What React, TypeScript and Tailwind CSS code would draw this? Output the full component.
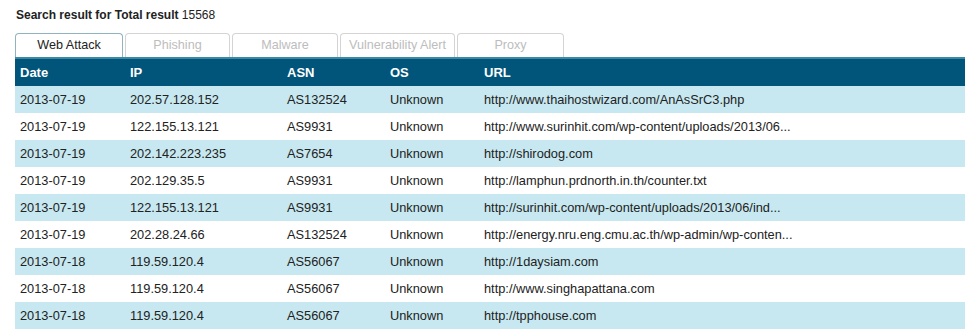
const rows = [
  { date: '2013-07-19', ip: '202.57.128.152', asn: 'AS132524', os: 'Unknown', url: 'http://www.thaihostwizard.com/AnAsSrC3.php' },
  { date: '2013-07-19', ip: '122.155.13.121', asn: 'AS9931', os: 'Unknown', url: 'http://www.surinhit.com/wp-content/uploads/2013/06...' },
  { date: '2013-07-19', ip: '202.142.223.235', asn: 'AS7654', os: 'Unknown', url: 'http://shirodog.com' },
  { date: '2013-07-19', ip: '202.129.35.5', asn: 'AS9931', os: 'Unknown', url: 'http://lamphun.prdnorth.in.th/counter.txt' },
  { date: '2013-07-19', ip: '122.155.13.121', asn: 'AS9931', os: 'Unknown', url: 'http://surinhit.com/wp-content/uploads/2013/06/ind...' },
  { date: '2013-07-19', ip: '202.28.24.66', asn: 'AS132524', os: 'Unknown', url: 'http://energy.nru.eng.cmu.ac.th/wp-admin/wp-conten...' },
  { date: '2013-07-18', ip: '119.59.120.4', asn: 'AS56067', os: 'Unknown', url: 'http://1daysiam.com' },
  { date: '2013-07-18', ip: '119.59.120.4', asn: 'AS56067', os: 'Unknown', url: 'http://www.singhapattana.com' },
  { date: '2013-07-18', ip: '119.59.120.4', asn: 'AS56067', os: 'Unknown', url: 'http://tpphouse.com' },
];

const tabs = [
  { label: 'Web Attack', w: 'w-[108px]' },
  { label: 'Phishing', w: 'w-[105px]' },
  { label: 'Malware', w: 'w-[106px]' },
  { label: 'Vulnerability Alert', w: 'w-[115px]' },
  { label: 'Proxy', w: 'w-[107px]' },
];

export default function App() {
  return (
    <div className="w-[967px] h-[336px] bg-white text-[12px] text-[#333] font-['Liberation_Sans',Arial,sans-serif]">
      <div className="pl-[16px] pt-[6px] h-[33px] text-[12px] text-[#222]">
        <span className="font-bold">Search result for Total result</span> 15568
      </div>

      <div className="flex gap-[2px] pl-[15px] h-[24px] items-end">
        {tabs.map((t, i) => (
          <div
            key={t.label}
            className={`${t.w} h-[24px] flex items-center justify-center rounded-t-[4px] border border-b-0 text-[12.6px] ${
              i === 0 ? 'border-[#8fb3bf] text-[#222] bg-white' : 'border-[#d4d4d4] text-[#bdbdbd] bg-white'
            }`}
          >
            {t.label}
          </div>
        ))}
      </div>

      <div className="ml-[15px] w-[950px]">
        <div className="flex h-[29px] items-center bg-[#01557a] border-t-2 border-[#3a8aa3] text-white font-bold text-[13px]">
          <div className="w-[115px] pl-[5px]">Date</div>
          <div className="w-[157px]">IP</div>
          <div className="w-[103px]">ASN</div>
          <div className="w-[94px]">OS</div>
          <div className="flex-1">URL</div>
        </div>
        {rows.map((r, i) => (
          <div
            key={i}
            className={`flex h-[27px] items-center text-[12.8px] text-[#222] ${i % 2 === 0 ? 'bg-[#c7e8f0]' : 'bg-white'}`}
          >
            <div className="w-[115px] pl-[5px]">{r.date}</div>
            <div className="w-[157px]">{r.ip}</div>
            <div className="w-[103px]">{r.asn}</div>
            <div className="w-[94px]">{r.os}</div>
            <div className="flex-1">{r.url}</div>
          </div>
        ))}
      </div>
    </div>
  );
}
